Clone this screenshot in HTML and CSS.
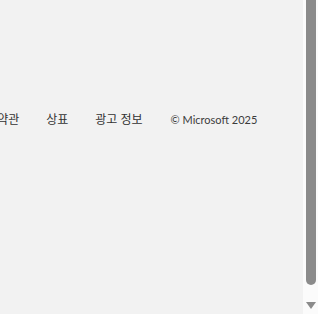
FILE: index.html
```html
<!DOCTYPE html>
<html lang="ko">
<head>
    <meta charset="UTF-8">
    <meta name="viewport" content="width=device-width, initial-scale=1.0">
    <title>Microsoft</title>
    <link rel="stylesheet" href="styles.css">
</head>
<body>
    <div class="page">
        <footer class="footer">
            <ul class="links">
                <li><a href="#">사용 약관</a></li>
                <li><a href="#">상표</a></li>
                <li><a href="#">광고 정보</a></li>
                <li class="copyright">© Microsoft 2025</li>
            </ul>
        </footer>
    </div>
    <div class="scrollbar">
        <div class="thumb"></div>
        <div class="arrow"></div>
    </div>
</body>
</html>
```
FILE: styles.css
```css
html, body {
    margin: 0;
    height: 100%;
}
body {
    display: flex;
    background-color: #f2f2f2;
    font-family: Lato, "Noto Sans CJK KR", sans-serif;
    color: #333;
    overflow: hidden;
}
.page {
    flex: 1;
    overflow: hidden;
}
.footer {
    padding-top: 112px;
}
.links {
    display: flex;
    align-items: baseline;
    gap: 27px;
    margin: 0 0 0 -28px;
    padding: 0;
    list-style: none;
    font-size: 12px;
    line-height: 16px;
    white-space: nowrap;
}
.links a {
    color: #333;
    text-decoration: none;
}
.copyright {
    margin-left: 1px;
    font-size: 11px;
    color: #3c3c3c;
}
.scrollbar {
    width: 15px;
    display: flex;
    flex-direction: column;
    align-items: center;
    background-color: #fbfbfb;
}
.thumb {
    flex: 1;
    width: 10px;
    margin: 0 0 17px 1px;
    background-color: #8b8b8b;
    border-radius: 0 0 5px 5px;
}
.arrow {
    width: 0;
    height: 0;
    border-left: 5px solid transparent;
    border-right: 5px solid transparent;
    border-top: 7px solid #8b8b8b;
    margin: 0 0 5px 1px;
}
```
